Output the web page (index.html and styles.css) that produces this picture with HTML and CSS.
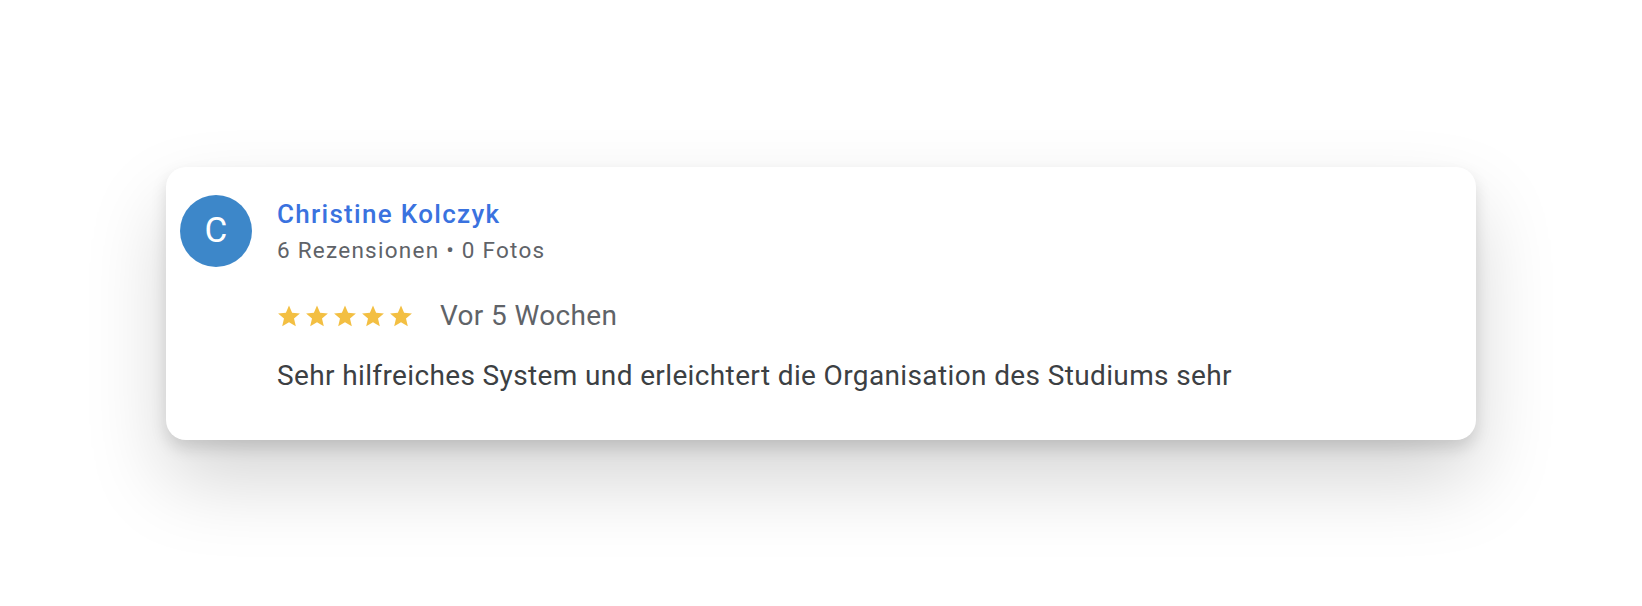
FILE: index.html
```html
<!DOCTYPE html>
<html lang="de">
<head>
<meta charset="utf-8">
<title>Rezension</title>
<link rel="stylesheet" href="styles.css">
</head>
<body>
<div class="card">
  <div class="header">
    <div class="avatar">C</div>
    <div class="info">
      <div class="name">Christine Kolczyk</div>
      <div class="meta">6 Rezensionen • 0 Fotos</div>
      <div class="rating">
        <div class="stars">
          <svg class="star" viewBox="0 0 24 24"><path d="M12 1.5l3.1 7.2 7.8.7-5.9 5.2 1.8 7.7L12 18.2l-6.8 4.1 1.8-7.7-5.9-5.2 7.8-.7z"/></svg>
          <svg class="star" viewBox="0 0 24 24"><path d="M12 1.5l3.1 7.2 7.8.7-5.9 5.2 1.8 7.7L12 18.2l-6.8 4.1 1.8-7.7-5.9-5.2 7.8-.7z"/></svg>
          <svg class="star" viewBox="0 0 24 24"><path d="M12 1.5l3.1 7.2 7.8.7-5.9 5.2 1.8 7.7L12 18.2l-6.8 4.1 1.8-7.7-5.9-5.2 7.8-.7z"/></svg>
          <svg class="star" viewBox="0 0 24 24"><path d="M12 1.5l3.1 7.2 7.8.7-5.9 5.2 1.8 7.7L12 18.2l-6.8 4.1 1.8-7.7-5.9-5.2 7.8-.7z"/></svg>
          <svg class="star" viewBox="0 0 24 24"><path d="M12 1.5l3.1 7.2 7.8.7-5.9 5.2 1.8 7.7L12 18.2l-6.8 4.1 1.8-7.7-5.9-5.2 7.8-.7z"/></svg>
        </div>
        <span class="date">Vor 5 Wochen</span>
      </div>
      <p class="text">Sehr hilfreiches System und erleichtert die Organisation des Studiums sehr</p>
    </div>
  </div>
</div>
</body>
</html>
```

FILE: styles.css
```css
html, body {
  margin: 0;
  padding: 0;
  background: #ffffff;
}
body {
  min-height: 100vh;
  display: flex;
  align-items: center;
  justify-content: center;
  font-family: Roboto, "Liberation Sans", Arial, sans-serif;
}
.card {
  box-sizing: border-box;
  width: 1310px;
  height: 273px;
  background: #ffffff;
  border-radius: 20px;
  padding: 28px 14px 0 14px;
  box-shadow: 0 8px 16px rgba(0, 0, 0, 0.13), 0 40px 80px rgba(0, 0, 0, 0.17);
}
.header {
  display: flex;
  align-items: flex-start;
  gap: 25px;
}
.avatar {
  flex: 0 0 72px;
  width: 72px;
  height: 72px;
  border-radius: 50%;
  background: #3d87c9;
  color: #ffffff;
  font-size: 35px;
  line-height: 72px;
  text-align: center;
}
.info {
  padding-top: 4px;
}
.name {
  font-size: 26px;
  font-weight: 500;
  line-height: 30px;
  letter-spacing: 1.3px;
  color: #3a72df;
}
.meta {
  margin-top: 6px;
  font-size: 22.5px;
  line-height: 30px;
  letter-spacing: 1.25px;
  color: #5f6368;
}
.rating {
  margin-top: 33px;
  display: flex;
  align-items: center;
  height: 36px;
}
.stars {
  display: flex;
  gap: 4px;
  margin-left: 0;
}
.star {
  width: 24px;
  height: 24px;
  fill: #f3bf42;
}
.date {
  margin-left: 27px;
  font-size: 28px;
  line-height: 36px;
  letter-spacing: 0.35px;
  color: #5f6368;
}
.text {
  margin: 24px 0 0 0;
  font-size: 28px;
  line-height: 36px;
  letter-spacing: 0.37px;
  color: #3c4043;
}
```
